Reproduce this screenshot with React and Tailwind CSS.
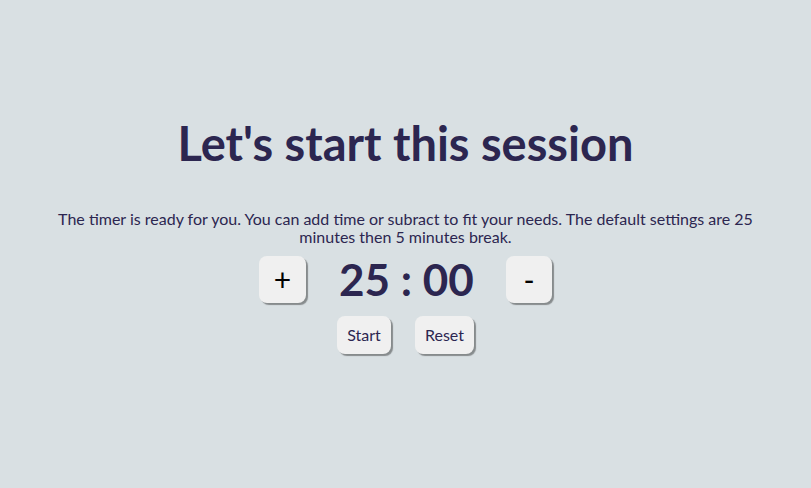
import { useState } from "react";

const btn =
  "bg-[#f0f0f0] rounded-[8px] shadow-[2px_2px_1px_rgba(0,0,0,0.38)] flex items-center justify-center";

const App = () => {
  const [minutes, setMinutes] = useState(25);
  const [seconds] = useState(0);

  const pad = (n) => String(n).padStart(2, "0");

  return (
    <div
      className="min-h-screen w-full bg-[#d9e0e3] text-[#2c2650] flex flex-col items-center pt-[114px]"
      style={{ fontFamily: "Lato, 'Noto Sans', sans-serif" }}
    >
      <h1 className="text-[47px] leading-[58px] font-bold">
        Let's start this session
      </h1>
      <p className="mt-[38px] text-[16px] leading-[18px] text-center px-[56px]">
        The timer is ready for you. You can add time or subract to fit your
        needs. The default settings are 25 minutes then 5 minutes break.
      </p>
      <div className="mt-[8px] flex items-center">
        <button
          type="button"
          onClick={() => setMinutes((m) => m + 1)}
          className={`${btn} w-[47px] h-[47px] text-[30px] text-black`}
        >
          +
        </button>
        <span className="mx-[33px] w-[134px] text-center text-[44px] font-bold leading-[50px] whitespace-nowrap">
          {minutes} : {pad(seconds)}
        </span>
        <button
          type="button"
          onClick={() => setMinutes((m) => Math.max(0, m - 1))}
          className={`${btn} w-[46px] h-[47px] text-[30px] text-black`}
        >
          -
        </button>
      </div>
      <div className="mt-[12px] flex gap-[24px]">
        <button type="button" className={`${btn} w-[54px] h-[38px] text-[16px]`}>
          Start
        </button>
        <button
          type="button"
          onClick={() => setMinutes(25)}
          className={`${btn} w-[59px] h-[38px] text-[16px]`}
        >
          Reset
        </button>
      </div>
    </div>
  );
};

export default App;
